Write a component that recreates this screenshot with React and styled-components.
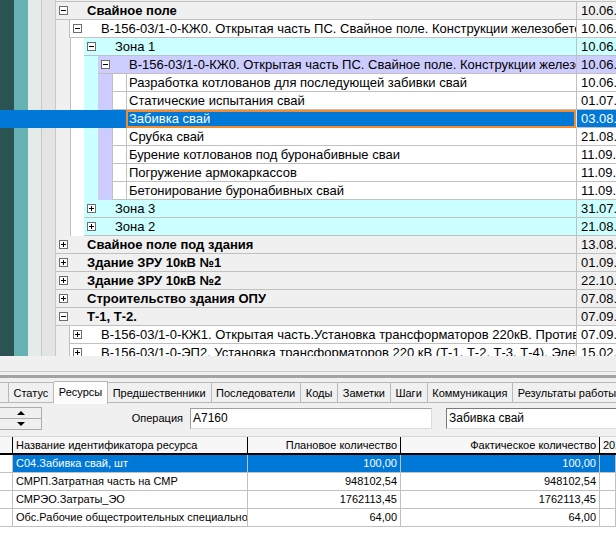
import styled, { createGlobalStyle } from 'styled-components'

const GlobalStyle = createGlobalStyle`
	html, body {
		margin: 0;
		padding: 0;
		overflow: hidden;
		background: #f0f0f0;
	}
	body {
		font-family: 'Liberation Sans', Arial, sans-serif;
	}
`

const LEVEL_BG = {
	1: '#f0f0f0',
	2: '#ffffff',
	3: '#ccffff',
	4: '#ccccff',
	5: '#ffffff',
}

const FIXED = ['#2b5353', '#66b2b2', '#e4ebe8', '#e4e4e4']

const SELECT_BLUE = '#0078d7'
const GRID_LINE = '#c0c0c0'

const KJ0 =
	'В-156-03/1-0-КЖ0. Открытая часть ПС. Свайное поле. Конструкции железобетонных фундаментов'

const rows = [
	{ level: 1, text: 'Свайное поле', open: true, date: '10.06.2020' },
	{ level: 2, text: KJ0, open: true, date: '10.06.2020' },
	{ level: 3, text: 'Зона 1', open: true, date: '10.06.2020' },
	{ level: 4, text: KJ0, open: true, date: '10.06.2020' },
	{ level: 5, text: 'Разработка котлованов для последующей забивки свай', date: '10.06.2020' },
	{ level: 5, text: 'Статические испытания свай', date: '01.07.2020' },
	{ level: 5, text: 'Забивка свай', date: '03.08.2020', selected: true },
	{ level: 5, text: 'Срубка свай', date: '21.08.2020' },
	{ level: 5, text: 'Бурение котлованов под буронабивные сваи', date: '11.09.2020' },
	{ level: 5, text: 'Погружение армокаркассов', date: '11.09.2020' },
	{ level: 5, text: 'Бетонирование буронабивных свай', date: '11.09.2020' },
	{ level: 3, text: 'Зона 3', date: '31.07.2020' },
	{ level: 3, text: 'Зона 2', date: '21.08.2020' },
	{ level: 1, text: 'Свайное поле под здания', date: '13.08.2020' },
	{ level: 1, text: 'Здание ЗРУ 10кВ №1', date: '01.09.2020' },
	{ level: 1, text: 'Здание ЗРУ 10кВ №2', date: '22.10.2020' },
	{ level: 1, text: 'Строительство здания ОПУ', date: '07.08.2020' },
	{ level: 1, text: 'Т-1, Т-2.', open: true, date: '07.09.2020' },
	{
		level: 2,
		text: 'В-156-03/1-0-КЖ1. Открытая часть.Установка трансформаторов 220кВ. Противопожарные мероприятия',
		date: '07.09.2020',
	},
	{
		level: 2,
		text: 'В-156-03/1-0-ЭП2. Установка трансформаторов 220 кВ (Т-1, Т-2, Т-3, Т-4). Электрооборудование',
		date: '15.02.2021',
	},
]

const tabs = [
	'',
	'Статус',
	'Ресурсы',
	'Предшественники',
	'Последователи',
	'Коды',
	'Заметки',
	'Шаги',
	'Коммуникация',
	'Результаты работы',
]

const resources = [
	{ name: 'С04.Забивка свай, шт', plan: '100,00', fact: '100,00', selected: true },
	{ name: 'СМРП.Затратная часть на СМР', plan: '948102,54', fact: '948102,54' },
	{ name: 'СМРЭО.Затраты_ЭО', plan: '1762113,45', fact: '1762113,45' },
	{ name: 'Обс.Рабочие общестроительных специальностей', plan: '64,00', fact: '64,00' },
]

const FixedCols = ({ selected }) => (
	<>
		{FIXED.map((c, i) => (
			<FixedCol key={i} $tone={selected ? 'transparent' : c} $line={i >= 2 && !selected} />
		))}
	</>
)

const ToggleBox = ({ open }) => (
	<Box>
		<BoxH />
		{!open && <BoxV />}
	</Box>
)

const TreeRow = ({ row }) => {
	const { level, text, open, date, selected } = row
	const bands = []
	for (let l = 1; l < level; l++) {
		bands.push(<Band key={l} $level={l} $selected={selected} />)
	}
	return (
		<Row $selected={selected}>
			<FixedCols selected={selected} />
			{bands}
			{level === 5 ? (
				<>
					<LeafGap $selected={selected} />
					<LeafText $selected={selected}>{text}</LeafText>
				</>
			) : (
				<Group $level={level}>
					<Toggle>
						<ToggleBox open={open} />
					</Toggle>
					<GroupText $bold={level === 1}>{text}</GroupText>
				</Group>
			)}
			<DateCell $level={level} $selected={selected}>
				{date}
			</DateCell>
		</Row>
	)
}

const App = () => {
	return (
		<Screen>
			<GlobalStyle />
			<TreePane>
				<TopEdge>
					<FixedCols />
					<TopEdgeFill />
				</TopEdge>
				{rows.map((r, i) => (
					<TreeRow key={i} row={r} />
				))}
			</TreePane>
			<Gap />
			<SplitBar />
			<TabStrip>
				{tabs.map((t, i) => (
					<Tab key={i} $active={t === 'Ресурсы'} $stub={t === ''}>
						{t}
					</Tab>
				))}
			</TabStrip>
			<Toolbar>
				<Spinner>
					<SpinButton>
						<ArrowUp />
					</SpinButton>
					<SpinButton>
						<ArrowDown />
					</SpinButton>
				</Spinner>
				<Label>Операция</Label>
				<Field $width={242}>А7160</Field>
				<Field $width={170} $dark>
					Забивка свай
				</Field>
			</Toolbar>
			<Grid>
				<HeadRow>
					<HeadCell $w={13} />
					<HeadCell $w={235}>Название идентификатора ресурса</HeadCell>
					<HeadCell $w={153} $right>
						Плановое количество
					</HeadCell>
					<HeadCell $w={199} $right>
						Фактическое количество
					</HeadCell>
					<HeadCell $w={16} $last>
						2020
					</HeadCell>
				</HeadRow>
				{resources.map((r, i) => (
					<GridRow key={i}>
						<Cell $w={13} />
						<Cell $w={235} $sel={r.selected}>
							{r.name}
						</Cell>
						<Cell $w={153} $right $sel={r.selected}>
							{r.plan}
						</Cell>
						<Cell $w={199} $right $sel={r.selected}>
							{r.fact}
						</Cell>
						<Cell $w={16} $sel={r.selected} />
					</GridRow>
				))}
			</Grid>
		</Screen>
	)
}
export default App

const Screen = styled.div`
	width: 616px;
	height: 560px;
	overflow: hidden;
	background: #f0f0f0;
	display: flex;
	flex-direction: column;
`

const TreePane = styled.div`
	height: 356px;
	flex: none;
	overflow: hidden;
	font-size: 13px;
	color: #000;
`

const TopEdge = styled.div`
	display: flex;
	height: 2px;
`

const TopEdgeFill = styled.div`
	flex: 1;
	background: #f0f0f0;
	border-bottom: 1px solid ${GRID_LINE};
	box-sizing: border-box;
`

const Row = styled.div`
	display: flex;
	height: 18px;
	background: ${(p) => (p.$selected ? SELECT_BLUE : 'transparent')};
	color: ${(p) => (p.$selected ? '#fff' : '#000')};
`

const FixedCol = styled.div`
	width: 14px;
	flex: none;
	box-sizing: border-box;
	background: ${(p) => p.$tone};
	border-right: ${(p) => (p.$line ? `1px solid #c8c8c8` : 'none')};
`

const Band = styled.div`
	width: 14px;
	flex: none;
	box-sizing: border-box;
	background: ${(p) => (p.$selected ? 'transparent' : LEVEL_BG[p.$level])};
	border-left: ${(p) => (p.$level === 2 && !p.$selected ? `1px solid ${GRID_LINE}` : 'none')};
`

const Group = styled.div`
	flex: 1;
	min-width: 0;
	display: flex;
	align-items: center;
	box-sizing: border-box;
	background: ${(p) => LEVEL_BG[p.$level]};
	border-bottom: 1px solid ${GRID_LINE};
	border-left: ${(p) => (p.$level === 2 ? `1px solid ${GRID_LINE}` : 'none')};
	margin-left: ${(p) => (p.$level === 2 ? '-1px' : '0')};
`

const Toggle = styled.div`
	width: 14px;
	flex: none;
	display: flex;
	align-items: center;
	padding-left: 3px;
	box-sizing: border-box;
`

const Box = styled.div`
	position: relative;
	width: 9px;
	height: 9px;
	box-sizing: border-box;
	border: 1px solid #6d6d6d;
	background: #fff;
`

const BoxH = styled.div`
	position: absolute;
	left: 1px;
	top: 3px;
	width: 5px;
	height: 1px;
	background: #000;
`

const BoxV = styled.div`
	position: absolute;
	left: 3px;
	top: 1px;
	width: 1px;
	height: 5px;
	background: #000;
`

const GroupText = styled.div`
	padding-left: 17px;
	white-space: nowrap;
	overflow: hidden;
	line-height: 17px;
	font-weight: ${(p) => (p.$bold ? 'bold' : 'normal')};
`

const LeafGap = styled.div`
	width: 14px;
	flex: none;
	box-sizing: border-box;
	background: ${(p) => (p.$selected ? 'transparent' : '#fff')};
	border-left: ${(p) => (p.$selected ? 'none' : `1px solid ${GRID_LINE}`)};
	border-bottom: ${(p) => (p.$selected ? 'none' : `1px solid ${GRID_LINE}`)};
`

const LeafText = styled.div`
	flex: 1;
	min-width: 0;
	box-sizing: border-box;
	white-space: nowrap;
	overflow: hidden;
	line-height: ${(p) => (p.$selected ? '14px' : '17px')};
	padding-left: ${(p) => (p.$selected ? '1px' : '2px')};
	background: ${(p) => (p.$selected ? SELECT_BLUE : '#fff')};
	border-left: ${(p) => (p.$selected ? '2px solid #f68b2c' : `1px solid ${GRID_LINE}`)};
	border-top: ${(p) => (p.$selected ? '2px solid #f68b2c' : 'none')};
	border-right: ${(p) => (p.$selected ? '2px solid #f68b2c' : 'none')};
	border-bottom: ${(p) => (p.$selected ? '2px solid #f68b2c' : `1px solid ${GRID_LINE}`)};
`

const DateCell = styled.div`
	width: 40px;
	flex: none;
	box-sizing: border-box;
	padding-left: 4px;
	line-height: 17px;
	white-space: nowrap;
	overflow: hidden;
	background: ${(p) => (p.$selected ? SELECT_BLUE : LEVEL_BG[p.$level])};
	border-left: 1px solid ${(p) => (p.$selected ? '#d8e8f8' : GRID_LINE)};
	border-bottom: 1px solid ${GRID_LINE};
`

const Gap = styled.div`
	height: 15px;
	flex: none;
`

const SplitBar = styled.div`
	height: 7px;
	flex: none;
	box-sizing: border-box;
	border-top: 1px solid #cacaca;
	border-bottom: 3px solid #a3a3a3;
`

const TabStrip = styled.div`
	display: flex;
	align-items: flex-start;
	height: 27px;
	flex: none;
	padding-top: 4px;
	box-sizing: border-box;
	font-size: 11px;
	white-space: nowrap;
	overflow: hidden;
`

const Tab = styled.div`
	flex: none;
	height: ${(p) => (p.$active ? '23px' : '21px')};
	margin-top: ${(p) => (p.$active ? '-1px' : '0')};
	width: ${(p) => (p.$stub ? '9px' : 'auto')};
	padding: ${(p) => (p.$stub ? '0' : '0 5px 0 4.5px')};
	box-sizing: border-box;
	line-height: 20px;
	background: ${(p) => (p.$active ? '#fcfcfc' : '#f0f0f0')};
	border: 1px solid #b9b9b9;
	border-left: none;
	border-bottom: ${(p) => (p.$active ? 'none' : '1px solid #b9b9b9')};
	color: #000;
`

const Toolbar = styled.div`
	display: flex;
	align-items: flex-start;
	height: 29px;
	flex: none;
	padding-top: 2px;
	box-sizing: border-box;
	font-size: 11px;
	overflow: hidden;
`

const Spinner = styled.div`
	width: 42px;
	height: 23px;
	flex: none;
	display: flex;
	flex-direction: column;
`

const SpinButton = styled.div`
	flex: 1;
	display: flex;
	align-items: center;
	justify-content: center;
	box-sizing: border-box;
	border: 1px solid #adadad;
	border-left: none;
	background: #f0f0f0;
	& + & {
		border-top: none;
	}
`

const ArrowUp = styled.div`
	width: 0;
	height: 0;
	border-left: 4px solid transparent;
	border-right: 4px solid transparent;
	border-bottom: 4px solid #000;
`

const ArrowDown = styled.div`
	width: 0;
	height: 0;
	border-left: 4px solid transparent;
	border-right: 4px solid transparent;
	border-top: 4px solid #000;
`

const Label = styled.div`
	width: 148px;
	flex: none;
	box-sizing: border-box;
	padding-right: 7px;
	text-align: right;
	line-height: 24px;
	margin-top: -1px;
`

const Field = styled.div`
	width: ${(p) => p.$width}px;
	height: 21px;
	flex: none;
	margin-right: 14px;
	margin-top: 1px;
	box-sizing: border-box;
	padding-left: 2px;
	line-height: 19px;
	background: #fff;
	border: 1px solid #dcdcdc;
	border-top-color: ${(p) => (p.$dark ? '#7a7a7a' : '#a0a0a0')};
	border-left-color: ${(p) => (p.$dark ? '#7a7a7a' : '#a0a0a0')};
	border-right-width: ${(p) => (p.$dark ? '0' : '1px')};
	font-size: 12px;
	white-space: nowrap;
`

const Grid = styled.div`
	margin-top: 2px;
	flex: 1;
	background: #fff;
	font-size: 11px;
	color: #000;
`

const HeadRow = styled.div`
	display: flex;
	height: 19px;
	box-sizing: border-box;
	border-top: 1px solid #d5d5d5;
	border-bottom: 2px solid #000;
	background: #f7f7f7;
`

const HeadCell = styled.div`
	width: ${(p) => p.$w}px;
	flex: none;
	box-sizing: border-box;
	border-right: ${(p) => (p.$last ? 'none' : '1px solid #000')};
	padding: ${(p) => (p.$right ? '0 3px 0 0' : '0 0 0 3px')};
	text-align: ${(p) => (p.$right ? 'right' : 'left')};
	line-height: 16px;
	white-space: nowrap;
	overflow: hidden;
`

const GridRow = styled.div`
	display: flex;
	height: 18px;
`

const Cell = styled.div`
	width: ${(p) => p.$w}px;
	flex: none;
	box-sizing: border-box;
	border-right: 1px solid ${GRID_LINE};
	border-bottom: 1px solid ${GRID_LINE};
	padding: ${(p) => (p.$right ? '0 3px 0 0' : '0 0 0 3px')};
	text-align: ${(p) => (p.$right ? 'right' : 'left')};
	line-height: 17px;
	white-space: nowrap;
	overflow: hidden;
	background: ${(p) => (p.$sel ? SELECT_BLUE : '#fff')};
	color: ${(p) => (p.$sel ? '#fff' : '#000')};
`
